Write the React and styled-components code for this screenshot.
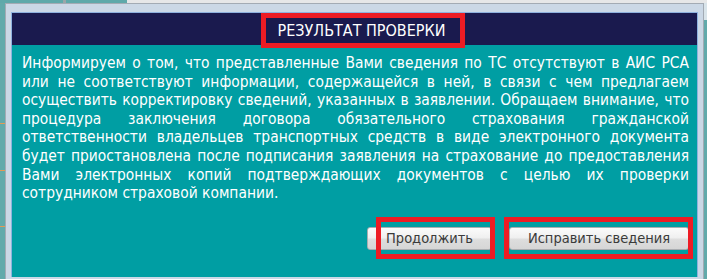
import React from "react";
import styled, { createGlobalStyle } from "styled-components";

const Global = createGlobalStyle`
  html, body { margin: 0; padding: 0; }
  body {
    width: 707px;
    height: 279px;
    overflow: hidden;
    background:
      linear-gradient(to right, #5fa9aa 0 63px, #9aa6a8 63px 66px, #5fa9aa 66px 127px, #e6e7e8 127px) top left / 100% 3px no-repeat,
      linear-gradient(#d9e4ea, #d9e4ea) right top / 3px 20px no-repeat,
      linear-gradient(#e39a55, #e39a55) 0 123px / 5px 1px no-repeat,
      linear-gradient(#e39a55, #e39a55) 0 170px / 5px 1px no-repeat,
      linear-gradient(#e39a55, #e39a55) 0 226px / 5px 1px no-repeat,
      #62aaab;
    font-family: Tahoma, "DejaVu Sans Condensed", "DejaVu Sans", sans-serif;
  }
`;

const Page = styled.div`
  padding: 3px 0 0 5px;
`;

const Dialog = styled.div`
  box-sizing: border-box;
  width: 699px;
  height: 276px;
  border: 1px solid #a3abb4;
  border-bottom: none;
  background: #cbd8e6;
  padding: 8px 5px 2px 5px;
  display: flex;
`;

const Frame = styled.div`
  flex: 1;
  border: 1px solid #8fb2de;
  border-bottom: none;
  display: flex;
  flex-direction: column;
`;

const Header = styled.div`
  height: 32px;
  background: #1a1a4e;
  display: flex;
  justify-content: center;
  padding-left: 14px;
`;

const Title = styled.div`
  position: relative;
  z-index: 1;
  color: #ffffff;
  font-size: 16px;
  line-height: 32px;
  padding-top: 2px;
`;

const Highlight = styled.span`
  position: absolute;
  top: ${(p) => p.$t}px;
  left: ${(p) => p.$l}px;
  right: ${(p) => p.$r}px;
  bottom: ${(p) => p.$b}px;
  border: 5px solid #ed1c24;
  pointer-events: none;
`;

const Body = styled.div`
  flex: 1;
  background: #009ea3;
  padding: 9px 8px 0 10px;
  display: flex;
  flex-direction: column;
`;

const Text = styled.div`
  color: #ffffff;
  font-size: 15.4px;
  line-height: 18.6px;
`;

const Line = styled.div`
  text-align: justify;
  text-align-last: ${(p) => (p.$last ? "left" : "justify")};
  white-space: nowrap;
`;

const Actions = styled.div`
  margin-top: 24px;
  display: flex;
  justify-content: flex-end;
  gap: 17px;
`;

const BtnWrap = styled.div`
  position: relative;
`;

const Button = styled.button`
  box-sizing: border-box;
  width: ${(p) => p.$w}px;
  height: 23px;
  border: 1px solid #a9adb1;
  border-radius: 3px;
  background: linear-gradient(#fbfbfb 0%, #f0f0f0 45%, #dddddd 55%, #d6d6d6 100%);
  color: #3a3a3a;
  font-family: Tahoma, "DejaVu Sans Condensed", "DejaVu Sans", sans-serif;
  font-size: 14.5px;
  padding: 0;
`;

const lines = [
  "Информируем о том, что представленные Вами сведения по ТС отсутствуют в АИС РСА",
  "или не соответствуют информации, содержащейся в ней, в связи с чем предлагаем",
  "осуществить корректировку сведений, указанных в заявлении. Обращаем внимание, что",
  "процедура заключения договора обязательного страхования гражданской",
  "ответственности владельцев транспортных средств в виде электронного документа",
  "будет приостановлена после подписания заявления на страхование до предоставления",
  "Вами электронных копий подтверждающих документов с целью их проверки",
  "сотрудником страховой компании.",
];

export default function App() {
  return (
    <>
      <Global />
      <Page>
        <Dialog>
          <Frame>
            <Header>
              <Title>
                РЕЗУЛЬТАТ ПРОВЕРКИ
                <Highlight $t={0} $l={-17} $r={-20} $b={-3} />
              </Title>
            </Header>
            <Body>
              <Text>
                {lines.map((l, i) => (
                  <Line key={i} $last={i === lines.length - 1}>
                    {l}
                  </Line>
                ))}
              </Text>
              <Actions>
                <BtnWrap>
                  <Button $w={125}>Продолжить</Button>
                  <Highlight $t={-10} $l={9} $r={-3} $b={-9} />
                </BtnWrap>
                <BtnWrap>
                  <Button $w={180}>Исправить сведения</Button>
                  <Highlight $t={-10} $l={-5} $r={-4} $b={-9} />
                </BtnWrap>
              </Actions>
            </Body>
          </Frame>
        </Dialog>
      </Page>
    </>
  );
}
